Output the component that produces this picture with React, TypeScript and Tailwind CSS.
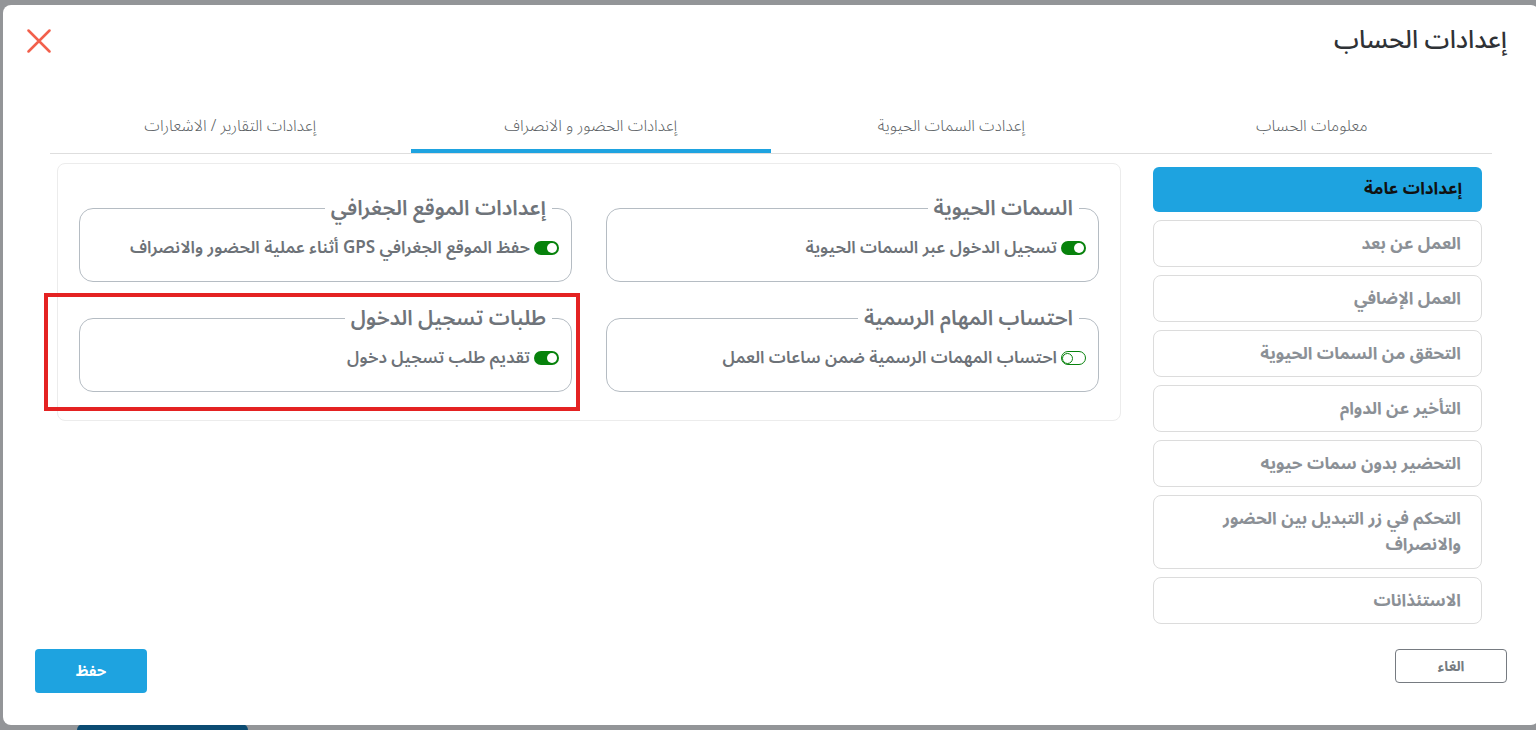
import React from "react";

const FONT = { fontFamily: '"Noto Sans Arabic","Noto Kufi Arabic","DejaVu Sans",sans-serif' };

function Toggle({ on }: { on: boolean }) {
  return on ? (
    <span className="inline-flex h-[14px] w-[25px] shrink-0 items-center justify-end rounded-full bg-[#07820c] px-[2px]" dir="ltr">
      <span className="h-[10px] w-[10px] rounded-full bg-white" />
    </span>
  ) : (
    <span className="inline-flex h-[14px] w-[25px] shrink-0 items-center justify-start rounded-full border-[1.5px] border-[#07820c] bg-white" dir="ltr">
      <span className="h-[11px] w-[11px] rounded-full border-[1.5px] border-[#07820c] bg-white" />
    </span>
  );
}

function Card({ title, label, on }: { title: string; label: string; on: boolean }) {
  return (
    <fieldset className="h-[88px] rounded-[14px] border-[1.5px] border-[#b5bcc3] px-[12px] pb-0 pt-0">
      <legend className="mr-[7px] px-[6px] text-[21px] font-semibold leading-[28px] text-[#6f747a]">{title}</legend>
      <div className="mt-[14px] flex items-center gap-[4px] text-[17px] font-semibold leading-[24px] text-[#6d7278]">
        <Toggle on={on} />
        <span>{label}</span>
      </div>
    </fieldset>
  );
}

const tabs = [
  { t: "معلومات الحساب", a: false },
  { t: "إعدادت السمات الحيوية", a: false },
  { t: "إعدادات الحضور و الانصراف", a: true },
  { t: "إعدادات التقارير / الاشعارات", a: false },
];

const side = [
  "العمل عن بعد",
  "العمل الإضافي",
  "التحقق من السمات الحيوية",
  "التأخير عن الدوام",
  "التحضير بدون سمات حيويه",
  "التحكم في زر التبديل بين الحضور والانصراف",
  "الاستئذانات",
];

export default function App() {
  return (
    <div className="relative h-[730px] w-[1536px] overflow-hidden bg-[#939598]" style={FONT}>
      <div className="absolute bottom-0 left-[77px] h-[6px] w-[171px] rounded-t-[8px] bg-[#0b4b72]" />
      <div className="absolute left-[3px] top-[5px] flex h-[720px] w-[1536px] flex-col rounded-[8px] bg-white" dir="rtl">
        {/* header */}
        <div className="flex h-[72px] items-center justify-between px-[32px]">
          <h1 className="text-[25px] font-medium text-[#2f3236]">إعدادات الحساب</h1>
          <svg width="24" height="24" viewBox="0 0 24 24" className="ml-[-8px]" fill="none" stroke="#f2604c" strokeWidth="2.5" strokeLinecap="round">
            <path d="M1.5 1.5L22.5 22.5M22.5 1.5L1.5 22.5" />
          </svg>
        </div>
        {/* tabs */}
        <div className="mx-[47px] mt-[26px] flex border-b border-[#dedede]">
          {tabs.map((t) => (
            <div
              key={t.t}
              className={`flex h-[50px] flex-1 items-center justify-center border-b-[4px] text-[16px] font-light text-[#5b5f64] ${t.a ? "border-[#1ea3e0]" : "border-transparent"}`}
            >
              <span>{t.t}</span>
            </div>
          ))}
        </div>
        {/* body */}
        <div className="mt-[9px] flex items-start gap-[32px] pl-[54px] pr-[57px]">
          <div className="flex w-[329px] shrink-0 flex-col gap-[8px] pt-[4px]">
            <div className="flex h-[45px] items-center rounded-[6px] bg-[#1ea3e0] pr-[20px] text-[17px] font-bold text-[#111]">
              إعدادات عامة
            </div>
            {side.map((s, i) => (
              <div
                key={s}
                className={`flex items-center rounded-[8px] border border-[#dcdcdc] pl-[40px] pr-[20px] text-[17px] font-bold leading-[26px] text-[#8b9096] ${i === 5 ? "h-[74px]" : "h-[47px]"}`}
              >
                {s}
              </div>
            ))}
          </div>
          <div className="relative flex-1">
            <div className="grid grid-cols-2 gap-x-[34px] gap-y-[22px] rounded-[8px] border border-[#ececec] px-[21px] pb-[28px] pt-[30px]">
              <Card title="السمات الحيوية" label="تسجيل الدخول عبر السمات الحيوية" on />
              <Card title="إعدادات الموقع الجغرافي" label="حفظ الموقع الجغرافي GPS أثناء عملية الحضور والانصراف" on />
              <Card title="احتساب المهام الرسمية" label="احتساب المهمات الرسمية ضمن ساعات العمل" on={false} />
              <Card title="طلبات تسجيل الدخول" label="تقديم طلب تسجيل دخول" on />
            </div>
            <div className="pointer-events-none absolute left-[-13px] top-[130px] h-[118px] w-[536px] border-[4px] border-[#e42222]" />
          </div>
        </div>
        {/* footer */}
        <div className="mt-auto flex items-start justify-between px-[32px] pb-[32px]">
          <button className="h-[34px] w-[112px] rounded-[4px] border border-[#767b81] text-[14px] font-bold text-[#767b81]">الغاء</button>
          <button className="h-[44px] w-[112px] rounded-[4px] bg-[#1ea3e0] text-[15px] font-bold text-white">حفظ</button>
        </div>
      </div>
    </div>
  );
}
